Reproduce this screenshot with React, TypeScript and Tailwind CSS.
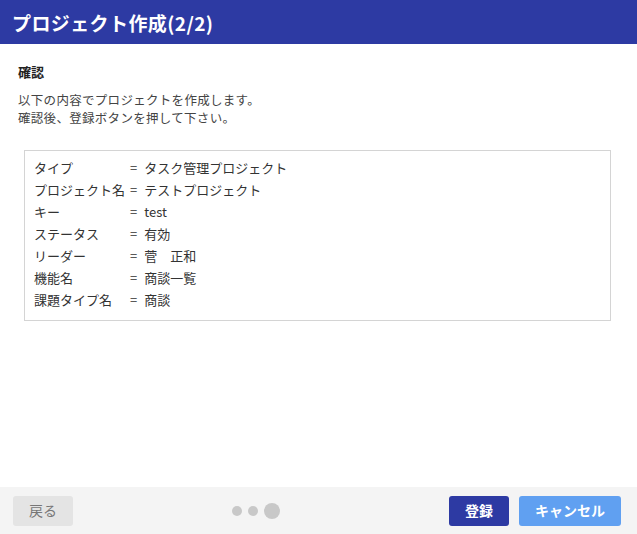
import React from "react";

const rows: [string, string][] = [
  ["タイプ", "タスク管理プロジェクト"],
  ["プロジェクト名", "テストプロジェクト"],
  ["キー", "test"],
  ["ステータス", "有効"],
  ["リーダー", "菅　正和"],
  ["機能名", "商談一覧"],
  ["課題タイプ名", "商談"],
];

export default function App() {
  return (
    <div
      className="flex h-[534px] w-[637px] flex-col bg-white text-[#333]"
      style={{ fontFamily: '"Noto Sans CJK JP", "Noto Sans", sans-serif' }}
    >
      <div className="flex h-[44px] items-center bg-[#2d3aa3] px-[12px]">
        <h1 className="text-[19px] font-bold leading-none tracking-[0.4px] text-white">プロジェクト作成(2/2)</h1>
      </div>
      <div className="flex-1 px-[18px] pt-[18px]">
        <div className="text-[13px] font-bold leading-[20px] text-[#222]">確認</div>
        <div className="mt-[9px] text-[12.5px] leading-[18px] tracking-[0.3px] text-[#444]">
          <div>以下の内容でプロジェクトを作成します。</div>
          <div>確認後、登録ボタンを押して下さい。</div>
        </div>
        <div className="mt-[23px] ml-[6px] mr-[8px] h-[171px] border border-[#d4d4d4] px-[9px] pt-[6px]">
          <table className="text-[13px] leading-[22px] text-[#333]">
            <tbody>
              {rows.map(([k, v]) => (
                <tr key={k}>
                  <td className="whitespace-nowrap p-0 pr-[5px]">{k}</td>
                  <td className="whitespace-nowrap p-0">
                    <span>=</span>
                    <span className="ml-[7px]">{v}</span>
                  </td>
                </tr>
              ))}
            </tbody>
          </table>
        </div>
      </div>
      <div className="flex h-[47px] items-center bg-[#f4f4f4] px-[13px]">
        <button className="h-[30px] w-[60px] rounded-[3px] bg-[#e4e4e4] text-[14px] text-[#777]">戻る</button>
        <div className="flex flex-1 items-center justify-center gap-[6px] pr-[10px]">
          <span className="h-[10px] w-[10px] rounded-full bg-[#c8c8c8]" />
          <span className="h-[10px] w-[10px] rounded-full bg-[#c8c8c8]" />
          <span className="h-[16px] w-[16px] rounded-full bg-[#c8c8c8]" />
        </div>
        <div className="flex gap-[10px] pr-[3px]">
          <button className="h-[30px] w-[60px] rounded-[3px] bg-[#2d3aa3] text-[14px] font-bold text-white">登録</button>
          <button className="h-[30px] w-[102px] rounded-[3px] bg-[#60a0f1] text-[14px] font-bold text-white">キャンセル</button>
        </div>
      </div>
    </div>
  );
}
